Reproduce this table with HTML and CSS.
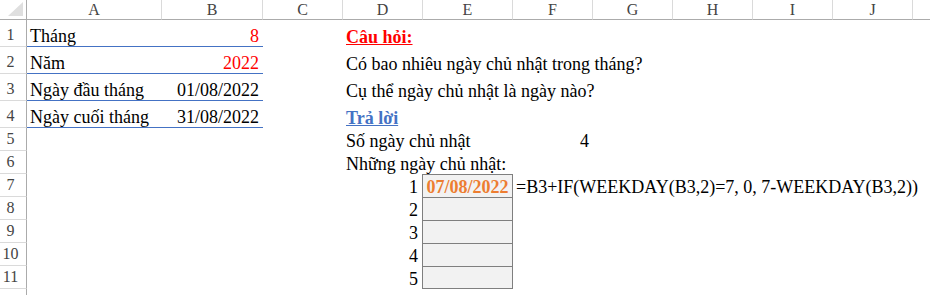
FILE: index.html
```html
<!DOCTYPE html>
<html lang="vi">
<head>
<meta charset="utf-8">
<title>Đếm ngày chủ nhật</title>
<link rel="stylesheet" href="styles.css">
</head>
<body>
<div class="sheet">
  <div class="row head">
    <div class="corner"><span class="tri"></span></div>
    <div class="ch">A</div><div class="ch">B</div><div class="ch">C</div><div class="ch">D</div><div class="ch">E</div>
    <div class="ch">F</div><div class="ch">G</div><div class="ch">H</div><div class="ch">I</div><div class="ch">J</div><div class="ch"></div>
  </div>

  <div class="row tall">
    <div class="rh">1</div>
    <div class="c line">Tháng</div><div class="c line num red">8</div><div class="c"></div>
    <div class="c from-d"><span class="title">Câu hỏi:</span></div>
  </div>
  <div class="row tall">
    <div class="rh">2</div>
    <div class="c line">Năm</div><div class="c line num red">2022</div><div class="c"></div>
    <div class="c from-d">Có bao nhiêu ngày chủ nhật trong tháng?</div>
  </div>
  <div class="row tall">
    <div class="rh">3</div>
    <div class="c line">Ngày đầu tháng</div><div class="c line num">01/08/2022</div><div class="c"></div>
    <div class="c from-d">Cụ thể ngày chủ nhật là ngày nào?</div>
  </div>
  <div class="row tall">
    <div class="rh">4</div>
    <div class="c line">Ngày cuối tháng</div><div class="c line num">31/08/2022</div><div class="c"></div>
    <div class="c from-d"><span class="answer">Trả lời</span></div>
  </div>

  <div class="row">
    <div class="rh">5</div>
    <div class="c"></div><div class="c"></div><div class="c"></div>
    <div class="c span2">Số ngày chủ nhật</div><div class="c num">4</div>
  </div>
  <div class="row">
    <div class="rh">6</div>
    <div class="c"></div><div class="c"></div><div class="c"></div>
    <div class="c from-d">Những ngày chủ nhật:</div>
  </div>
  <div class="row">
    <div class="rh">7</div>
    <div class="c"></div><div class="c"></div><div class="c"></div>
    <div class="c num idx">1</div>
    <div class="c box date">07/08/2022</div>
    <div class="c from-f">=B3+IF(WEEKDAY(B3,2)=7, 0, 7-WEEKDAY(B3,2))</div>
  </div>
  <div class="row">
    <div class="rh">8</div>
    <div class="c"></div><div class="c"></div><div class="c"></div>
    <div class="c num idx">2</div><div class="c box"></div>
  </div>
  <div class="row">
    <div class="rh">9</div>
    <div class="c"></div><div class="c"></div><div class="c"></div>
    <div class="c num idx">3</div><div class="c box"></div>
  </div>
  <div class="row">
    <div class="rh">10</div>
    <div class="c"></div><div class="c"></div><div class="c"></div>
    <div class="c num idx">4</div><div class="c box"></div>
  </div>
  <div class="row">
    <div class="rh">11</div>
    <div class="c"></div><div class="c"></div><div class="c"></div>
    <div class="c num idx">5</div><div class="c box last"></div>
  </div>
  <div class="row">
    <div class="rh"></div>
  </div>
</div>
</body>
</html>
```

FILE: styles.css
```css
html, body {
  margin: 0;
  padding: 0;
  background: #ffffff;
  overflow: hidden;
}

body {
  width: 930px;
  height: 295px;
}

.sheet {
  font-family: "Liberation Serif", "Times New Roman", serif;
  font-size: 18px;
  color: #000000;
}

/* every row shares the same column tracks: row header, A … K */
.row {
  display: grid;
  grid-template-columns: 27px 135px 101px 80px 80px 90px 80px 80px 80px 80px 80px 80px;
  height: 23px;
}

.row.tall {
  height: 27px;
}

.row.head {
  height: 20px;
}

/* column headers */
.corner,
.ch {
  box-sizing: border-box;
  border-bottom: 1px solid #ababab;
  background: #ffffff;
}

.corner {
  position: relative;
  border-right: 1px solid #ababab;
}

.corner .tri {
  position: absolute;
  right: 3px;
  bottom: 3px;
  width: 0;
  height: 0;
  border-left: 15px solid transparent;
  border-bottom: 14px solid #dfdfdf;
}

.ch {
  border-right: 1px solid #dadada;
  display: flex;
  align-items: center;
  justify-content: center;
  font-size: 16px;
  color: #444444;
  line-height: 18px;
  padding-top: 1px;
}

/* row headers */
.rh {
  box-sizing: border-box;
  border-right: 1px solid #ababab;
  border-bottom: 1px solid #dadada;
  display: flex;
  align-items: flex-end;
  justify-content: center;
  padding-right: 5px;
  font-size: 16px;
  color: #444444;
  line-height: 18px;
  padding-bottom: 2px;
}

/* cells */
.c {
  box-sizing: border-box;
  display: flex;
  align-items: flex-end;
  padding: 0 3px 0 3px;
  line-height: 20px;
  white-space: nowrap;
  min-width: 0;
}

.c.num {
  justify-content: flex-end;
  padding-right: 4px;
}

.c.idx {
  padding-right: 5px;
}

/* text that spills over the empty cells on its right */
.c.from-d {
  grid-column: 5 / -1;
}

.c.from-f {
  grid-column: 7 / -1;
}

.c.span2 {
  grid-column: span 2;
}

.c.line {
  border-bottom: 1px solid #4472c4;
}

.red {
  color: #ff0000;
}

.title {
  color: #ff0000;
  font-weight: bold;
  text-decoration: underline;
  text-decoration-color: #ff0000;
}

.answer {
  color: #4472c4;
  font-weight: bold;
  text-decoration: underline;
}

/* the list of Sundays */
.c.box {
  margin-left: -1px;
  background: #f2f2f2;
  border: 1px solid #7f7f7f;
  border-bottom: none;
  justify-content: center;
}

.c.box.last {
  border-bottom: 1px solid #7f7f7f;
}

.c.date {
  color: #ed7d31;
  font-weight: bold;
}
```
